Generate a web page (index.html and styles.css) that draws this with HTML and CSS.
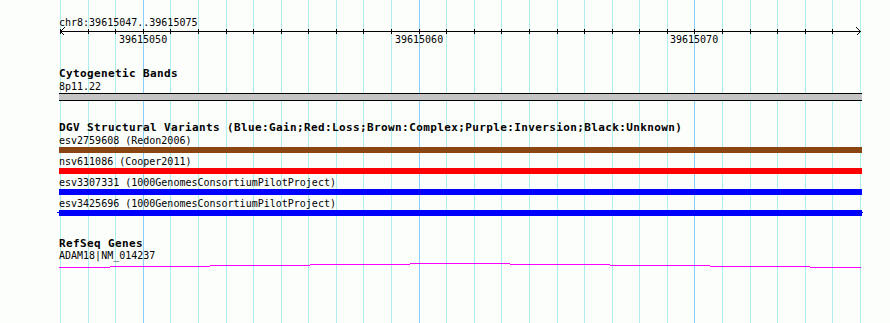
FILE: index.html
```html
<!DOCTYPE html>
<html>
<head>
<meta charset="utf-8">
<link rel="stylesheet" href="styles.css">
</head>
<body>
<div class="view">
  <svg class="grid" width="890" height="323" shape-rendering="crispEdges">
    <g class="minor">
      <line x1="60.5" y1="0" x2="60.5" y2="323"/>
      <line x1="88.5" y1="0" x2="88.5" y2="323"/>
      <line x1="115.5" y1="0" x2="115.5" y2="323"/>
      <line x1="170.5" y1="0" x2="170.5" y2="323"/>
      <line x1="198.5" y1="0" x2="198.5" y2="323"/>
      <line x1="226.5" y1="0" x2="226.5" y2="323"/>
      <line x1="253.5" y1="0" x2="253.5" y2="323"/>
      <line x1="281.5" y1="0" x2="281.5" y2="323"/>
      <line x1="308.5" y1="0" x2="308.5" y2="323"/>
      <line x1="336.5" y1="0" x2="336.5" y2="323"/>
      <line x1="363.5" y1="0" x2="363.5" y2="323"/>
      <line x1="391.5" y1="0" x2="391.5" y2="323"/>
      <line x1="446.5" y1="0" x2="446.5" y2="323"/>
      <line x1="474.5" y1="0" x2="474.5" y2="323"/>
      <line x1="501.5" y1="0" x2="501.5" y2="323"/>
      <line x1="529.5" y1="0" x2="529.5" y2="323"/>
      <line x1="557.5" y1="0" x2="557.5" y2="323"/>
      <line x1="584.5" y1="0" x2="584.5" y2="323"/>
      <line x1="612.5" y1="0" x2="612.5" y2="323"/>
      <line x1="639.5" y1="0" x2="639.5" y2="323"/>
      <line x1="667.5" y1="0" x2="667.5" y2="323"/>
      <line x1="722.5" y1="0" x2="722.5" y2="323"/>
      <line x1="750.5" y1="0" x2="750.5" y2="323"/>
      <line x1="777.5" y1="0" x2="777.5" y2="323"/>
      <line x1="805.5" y1="0" x2="805.5" y2="323"/>
      <line x1="832.5" y1="0" x2="832.5" y2="323"/>
      <line x1="860.5" y1="0" x2="860.5" y2="323"/>
    </g>
    <g class="major">
      <line x1="143.5" y1="0" x2="143.5" y2="323"/>
      <line x1="419.5" y1="0" x2="419.5" y2="323"/>
      <line x1="694.5" y1="0" x2="694.5" y2="323"/>
    </g>
  </svg>

  <div class="tracks">
    <div class="ruler">
      <div class="ruler-label">chr8:39615047..39615075</div>
      <svg class="axis" width="890" height="7" shape-rendering="crispEdges">
        <line x1="60" y1="5.5" x2="861" y2="5.5"/>
        <polyline class="arrow" points="64.5,1.5 60.5,5.5 64.5,9.5"/>
        <polyline class="arrow" points="856.5,1.5 860.5,5.5 856.5,9.5"/>
        <g class="ticks">
          <line x1="60.5" y1="3" x2="60.5" y2="8"/>
          <line x1="88.5" y1="3" x2="88.5" y2="8"/>
          <line x1="115.5" y1="3" x2="115.5" y2="8"/>
          <line x1="143.5" y1="3" x2="143.5" y2="8"/>
          <line x1="170.5" y1="3" x2="170.5" y2="8"/>
          <line x1="198.5" y1="3" x2="198.5" y2="8"/>
          <line x1="226.5" y1="3" x2="226.5" y2="8"/>
          <line x1="253.5" y1="3" x2="253.5" y2="8"/>
          <line x1="281.5" y1="3" x2="281.5" y2="8"/>
          <line x1="308.5" y1="3" x2="308.5" y2="8"/>
          <line x1="336.5" y1="3" x2="336.5" y2="8"/>
          <line x1="363.5" y1="3" x2="363.5" y2="8"/>
          <line x1="391.5" y1="3" x2="391.5" y2="8"/>
          <line x1="419.5" y1="3" x2="419.5" y2="8"/>
          <line x1="446.5" y1="3" x2="446.5" y2="8"/>
          <line x1="474.5" y1="3" x2="474.5" y2="8"/>
          <line x1="501.5" y1="3" x2="501.5" y2="8"/>
          <line x1="529.5" y1="3" x2="529.5" y2="8"/>
          <line x1="557.5" y1="3" x2="557.5" y2="8"/>
          <line x1="584.5" y1="3" x2="584.5" y2="8"/>
          <line x1="612.5" y1="3" x2="612.5" y2="8"/>
          <line x1="639.5" y1="3" x2="639.5" y2="8"/>
          <line x1="667.5" y1="3" x2="667.5" y2="8"/>
          <line x1="694.5" y1="3" x2="694.5" y2="8"/>
          <line x1="722.5" y1="3" x2="722.5" y2="8"/>
          <line x1="750.5" y1="3" x2="750.5" y2="8"/>
          <line x1="777.5" y1="3" x2="777.5" y2="8"/>
          <line x1="805.5" y1="3" x2="805.5" y2="8"/>
          <line x1="832.5" y1="3" x2="832.5" y2="8"/>
        </g>
      </svg>
      <div class="tick-labels">
        <span class="tick-label" style="left:119px">39615050</span>
        <span class="tick-label" style="left:395px">39615060</span>
        <span class="tick-label" style="left:670px">39615070</span>
      </div>
    </div>

    <section class="track">
      <div class="track-title">Cytogenetic Bands</div>
      <div class="feat-label">8p11.22</div>
      <div class="band"></div>
    </section>

    <section class="track">
      <div class="track-title">DGV Structural Variants (Blue:Gain;Red:Loss;Brown:Complex;Purple:Inversion;Black:Unknown)</div>
      <div class="variant">
        <div class="feat-label">esv2759608 (Redon2006)</div>
        <div class="bar bar-brown"></div>
      </div>
      <div class="variant">
        <div class="feat-label">nsv611086 (Cooper2011)</div>
        <div class="bar bar-red"></div>
      </div>
      <div class="variant">
        <div class="feat-label">esv3307331 (1000GenomesConsortiumPilotProject)</div>
        <div class="bar bar-blue"></div>
      </div>
      <div class="variant">
        <div class="feat-label">esv3425696 (1000GenomesConsortiumPilotProject)</div>
        <div class="bar bar-blue bar-ext"></div>
      </div>
    </section>

    <section class="track track-genes">
      <div class="track-title">RefSeq Genes</div>
      <div class="feat-label">ADAM18|NM_014237</div>
      <svg class="gene" width="890" height="6" shape-rendering="crispEdges">
        <line x1="59" y1="5.5" x2="110" y2="5.5"/>
        <line x1="110" y1="4.5" x2="210" y2="4.5"/>
        <line x1="210" y1="3.5" x2="310" y2="3.5"/>
        <line x1="310" y1="2.5" x2="410" y2="2.5"/>
        <line x1="410" y1="1.5" x2="510" y2="1.5"/>
        <line x1="510" y1="2.5" x2="610" y2="2.5"/>
        <line x1="610" y1="3.5" x2="710" y2="3.5"/>
        <line x1="710" y1="4.5" x2="810" y2="4.5"/>
        <line x1="810" y1="5.5" x2="861" y2="5.5"/>
      </svg>
    </section>
  </div>
</div>
</body>
</html>
```

FILE: styles.css
```css
html, body {
  margin: 0;
  padding: 0;
  background: #fcfefc;
}

.view {
  position: relative;
  width: 890px;
  height: 323px;
  overflow: hidden;
  background: #fcfefc;
  font-family: "DejaVu Sans Mono", "Liberation Mono", monospace;
  font-size: 10px;
  line-height: 13px;
  color: #000;
}

.grid {
  position: absolute;
  left: 0;
  top: 0;
}

.grid .minor line {
  stroke: #afeeee;
  stroke-width: 1;
}

.grid .major line {
  stroke: #87cefa;
  stroke-width: 1;
}

.tracks {
  position: relative;
  display: flex;
  flex-direction: column;
}

.ruler {
  padding-top: 16px;
  display: flex;
  flex-direction: column;
}

.ruler-label {
  height: 10px;
  padding-left: 59px;
  white-space: nowrap;
}

.axis {
  display: block;
  overflow: visible;
}

.axis line {
  stroke: #000;
  stroke-width: 1;
}

.axis .arrow {
  fill: none;
  stroke: #000;
  stroke-width: 1;
}

.tick-labels {
  position: relative;
  height: 14px;
}

.tick-label {
  position: absolute;
  top: 0;
  white-space: nowrap;
}

.track {
  margin-top: 20px;
  display: flex;
  flex-direction: column;
}

.track-title {
  height: 13px;
  padding-left: 59px;
  font-weight: bold;
  font-size: 11px;
  letter-spacing: 0.38px;
  white-space: nowrap;
}

.feat-label {
  height: 13px;
  padding-left: 59px;
  white-space: nowrap;
}

.band {
  margin-left: 59px;
  width: 803px;
  height: 6px;
  background: #c4c4c4;
  border-top: 1px solid #000;
  border-bottom: 1px solid #000;
}

.variant {
  display: flex;
  flex-direction: column;
  margin-bottom: 2px;
}

.variant:last-child {
  margin-bottom: 0;
}

.bar {
  position: relative;
  margin-left: 59px;
  width: 803px;
  height: 6px;
}

.bar-brown { background: #8b4513; }
.bar-red { background: #ff0000; }
.bar-blue { background: #0000ff; }

.bar-ext::after {
  content: "";
  position: absolute;
  left: -2px;
  right: -1px;
  top: 2px;
  height: 1px;
  background: #0000ff;
}

.track-genes {
  margin-top: 21px;
}

.track-genes .track-title {
  height: 12px;
}

.gene {
  display: block;
}

.gene line {
  stroke: #ff00ff;
  stroke-width: 1;
}
```
